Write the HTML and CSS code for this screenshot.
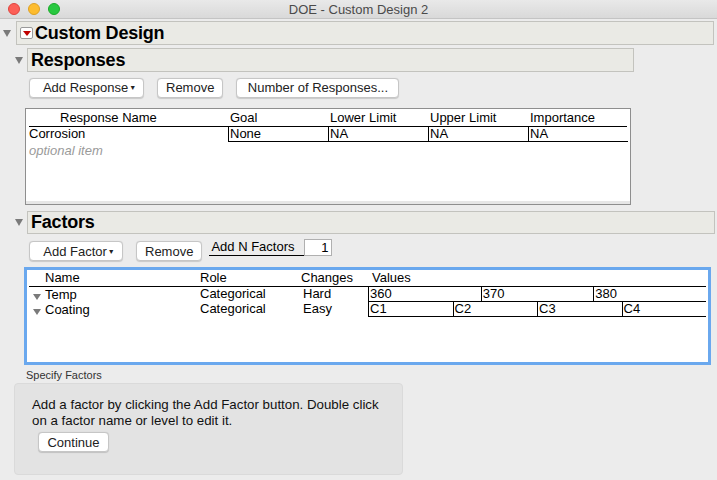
FILE: index.html
```html
<!DOCTYPE html>
<html>
<head>
<meta charset="utf-8">
<link rel="stylesheet" href="styles.css">
</head>
<body>
<div class="titlebar">
  <div class="lights">
    <span class="light red"></span>
    <span class="light yellow"></span>
    <span class="light green"></span>
  </div>
  <div class="title">DOE - Custom Design 2</div>
</div>

<div class="outline top">
  <span class="tri"><svg width="8" height="7" viewBox="0 0 8 7"><path d="M0 0H8L4 7Z" fill="#7a7a7a"/></svg></span>
  <div class="headbox main">
    <span class="redmenu"><svg width="8" height="5" viewBox="0 0 8 5"><path d="M0 0H8L4 5Z" fill="#c00000"/></svg></span>
    <span class="headtext">Custom Design</span>
  </div>
</div>

<div class="section">
  <div class="outline">
    <span class="tri"><svg width="8" height="7" viewBox="0 0 8 7"><path d="M0 0H8L4 7Z" fill="#7a7a7a"/></svg></span>
    <div class="headbox resp"><span class="headtext">Responses</span></div>
  </div>
  <div class="btnrow">
    <button class="btn addresp">Add Response<span class="caret">▼</span></button>
    <button class="btn">Remove</button>
    <button class="btn numresp">Number of Responses...</button>
  </div>
  <div class="rtable">
    <div class="rinner">
      <div class="rhead">
        <span class="c-name hname">Response Name</span>
        <span class="c-col">Goal</span>
        <span class="c-col">Lower Limit</span>
        <span class="c-col">Upper Limit</span>
        <span class="c-col">Importance</span>
      </div>
      <div class="rrow">
        <span class="c-name">Corrosion</span>
        <span class="c-col cell">None</span>
        <span class="c-col cell">NA</span>
        <span class="c-col cell">NA</span>
        <span class="c-col cell">NA</span>
      </div>
      <div class="optional">optional item</div>
    </div>
  </div>

  <div class="outline factors-head">
    <span class="tri"><svg width="8" height="7" viewBox="0 0 8 7"><path d="M0 0H8L4 7Z" fill="#7a7a7a"/></svg></span>
    <div class="headbox fact"><span class="headtext">Factors</span></div>
  </div>
  <div class="btnrow frow">
    <button class="btn addfact">Add Factor<span class="caret">▼</span></button>
    <button class="btn">Remove</button>
    <span class="addn">Add N Factors</span>
    <span class="ninput">1</span>
  </div>
  <div class="ftable">
    <div class="fhead">
      <span class="f-name">Name</span>
      <span class="f-role">Role</span>
      <span class="f-chg">Changes</span>
      <span class="f-val">Values</span>
    </div>
    <div class="frow-d">
      <span class="f-name"><span class="ftri"><svg width="8" height="6" viewBox="0 0 8 6"><path d="M0 0H8L4 6Z" fill="#7a7a7a"/></svg></span>Temp</span>
      <span class="f-role">Categorical</span>
      <span class="f-chg">Hard</span>
      <span class="f-vals">
        <span class="vcell">360</span><span class="vcell">370</span><span class="vcell">380</span>
      </span>
    </div>
    <div class="frow-d">
      <span class="f-name"><span class="ftri"><svg width="8" height="6" viewBox="0 0 8 6"><path d="M0 0H8L4 6Z" fill="#7a7a7a"/></svg></span>Coating</span>
      <span class="f-role">Categorical</span>
      <span class="f-chg">Easy</span>
      <span class="f-vals">
        <span class="vcell">C1</span><span class="vcell">C2</span><span class="vcell">C3</span><span class="vcell">C4</span>
      </span>
    </div>
  </div>
</div>

<div class="specify">Specify Factors</div>
<div class="panel">
  <p>Add a factor by clicking the Add Factor button. Double click on a factor name or level to edit it.</p>
  <button class="btn cont">Continue</button>
</div>
</body>
</html>
```

FILE: styles.css
```css
* { box-sizing: border-box; }
body {
  margin: 0;
  background: #ececec;
  font-family: "Liberation Sans", Arial, sans-serif;
  color: #000;
  width: 717px;
  height: 480px;
  overflow: hidden;
}
.titlebar {
  height: 19px;
  border-bottom: 1px solid #c4c4c4;
  background: linear-gradient(#e9e9e9, #d9d9d9);
  display: flex;
  align-items: center;
}
.lights {
  display: flex;
  gap: 8px;
  padding-left: 8px;
}
.light {
  width: 12px;
  height: 12px;
  border-radius: 50%;
  display: block;
}
.red { background: #fc5f57; border: 1px solid #e0443e; }
.yellow { background: #fdbc2e; border: 1px solid #dea123; }
.green { background: #28c840; border: 1px solid #1aab29; }
.title {
  flex: 1;
  text-align: center;
  font-size: 13px;
  color: #4a4a4a;
  margin-right: 60px;
}
.outline {
  display: flex;
  align-items: center;
}
.outline.top {
  margin-top: 2px;
  padding-left: 3px;
}
.tri {
  width: 13px;
  display: flex;
  align-items: center;
}
.headbox {
  background: #eaeae5;
  border: 1px solid #c3c3be;
  display: flex;
  align-items: center;
}
.headbox.main {
  width: 698px;
  height: 24px;
  padding-left: 3px;
}
.redmenu {
  width: 13px;
  height: 12px;
  border: 1px solid #9a9a9a;
  border-radius: 2px;
  background: #fff;
  display: flex;
  align-items: center;
  justify-content: center;
  margin-right: 2px;
}
.headtext {
  font-weight: bold;
  font-size: 18px;
  letter-spacing: -0.2px;
}
.section {
  padding-left: 15px;
}
.section .outline {
  margin-top: 3px;
}
.section .tri { width: 12px; }
.headbox.resp {
  width: 607px;
  height: 24px;
  padding-left: 3px;
}
.headbox.fact {
  width: 688px;
  height: 23px;
  padding-left: 3px;
}
.btnrow {
  display: flex;
  align-items: center;
  padding-left: 14px;
  margin-top: 5px;
  height: 21px;
}
.btn {
  font-family: "Liberation Sans", Arial, sans-serif;
  font-size: 13px;
  color: #222;
  background: #fff;
  border: 1px solid #c6c6c6;
  border-radius: 4px;
  height: 20px;
  padding: 0 8px;
  box-shadow: 0 0.5px 1px rgba(0,0,0,0.15);
  display: inline-flex;
  align-items: center;
  justify-content: center;
  margin-right: 13px;
  white-space: nowrap;
}
.caret { font-size: 7px; margin-left: 1px; }
.btn.addresp { width: 115px; padding: 0 0 0 6px; }
.btn.numresp { width: 163px; }
.rtable {
  margin-top: 10px;
  margin-left: 10px;
  width: 606px;
  height: 97px;
  border: 1px solid #8e8e8e;
  background: #fff;
  padding: 0 3px 3px 3px;
  position: relative;
}
.rtable::after {
  content: "";
  position: absolute;
  left: 0; right: 0; bottom: 0;
  height: 3px;
  background: #e6e6e6;
}
.rinner { font-size: 13px; }
.rhead, .rrow {
  display: flex;
}
.rhead {
  height: 18px;
  align-items: flex-end;
  border-bottom: 1px solid #000;
  width: 598px;
  padding-bottom: 1px;
}
.c-name { width: 199px; flex: none; }
.hname { padding-left: 31px; }
.c-col { width: 100px; flex: none; padding-left: 2px; }
.rrow { height: 15px; width: 599px; }
.rrow .cell {
  border-left: 1px solid #000;
  border-bottom: 1px solid #000;
  line-height: 14px;
  padding-left: 1px;
}
.rrow .c-name { line-height: 14px; }
.optional {
  color: #9a9a9a;
  font-style: italic;
  margin-top: 1px;
}
.section .outline.factors-head { margin-top: 6px; }
.btnrow.frow { margin-top: 7px; height: 20px; }
.btn.addfact { width: 94px; padding: 0 0 0 6px; }
.addn {
  font-size: 13px;
  border-bottom: 1px solid #000;
  width: 95px;
  height: 17px;
  padding-left: 2px;
  margin-left: -6px;
  align-self: flex-start;
  margin-top: -2px;
}
.ninput {
  width: 28px;
  height: 17px;
  border: 1px solid #b0b0b0;
  background: #fff;
  font-size: 13px;
  text-align: right;
  padding-right: 3px;
  align-self: flex-start;
  margin-top: -2px;
}
.ftable {
  margin-top: 6px;
  margin-left: 9px;
  width: 687px;
  height: 98px;
  border: 3px solid #6aa8ee;
  background: #fff;
  padding: 0 2px;
  font-size: 13px;
}
.fhead, .frow-d { display: flex; }
.fhead {
  height: 17px;
  border-bottom: 1px solid #000;
  align-items: flex-end;
  padding-bottom: 1px;
}
.f-name { width: 171px; flex: none; padding-left: 16px; }
.f-role { width: 101px; flex: none; }
.f-chg { width: 67px; flex: none; }
.f-val { padding-left: 4px; }
.frow-d { height: 15px; line-height: 14px; }
.frow-d .f-name { padding-left: 4px; display: flex; align-items: center; }
.frow-d .f-chg { padding-left: 2px; }
.ftri {
  display: inline-flex;
  width: 12px;
  padding-top: 4px;
}
.f-vals {
  display: flex;
  flex: 1;
}
.vcell {
  flex: 1;
  border-left: 1px solid #000;
  border-bottom: 1px solid #000;
  padding-left: 1px;
}
.specify {
  font-size: 11px;
  color: #333;
  padding-left: 26px;
  margin-top: 4px;
  height: 14px;
}
.panel {
  margin-left: 14px;
  width: 389px;
  height: 92px;
  background: #e3e3e3;
  border: 1px solid #dadada;
  border-radius: 4px;
  padding: 13px 0 0 17px;
  margin-top: 0;
}
.panel p {
  margin: 0;
  width: 352px;
  font-size: 13.3px;
  line-height: 16px;
  color: #111;
}
.btn.cont {
  margin-left: 6px;
  margin-top: 3px;
  width: 71px;
  height: 20px;
}
```
